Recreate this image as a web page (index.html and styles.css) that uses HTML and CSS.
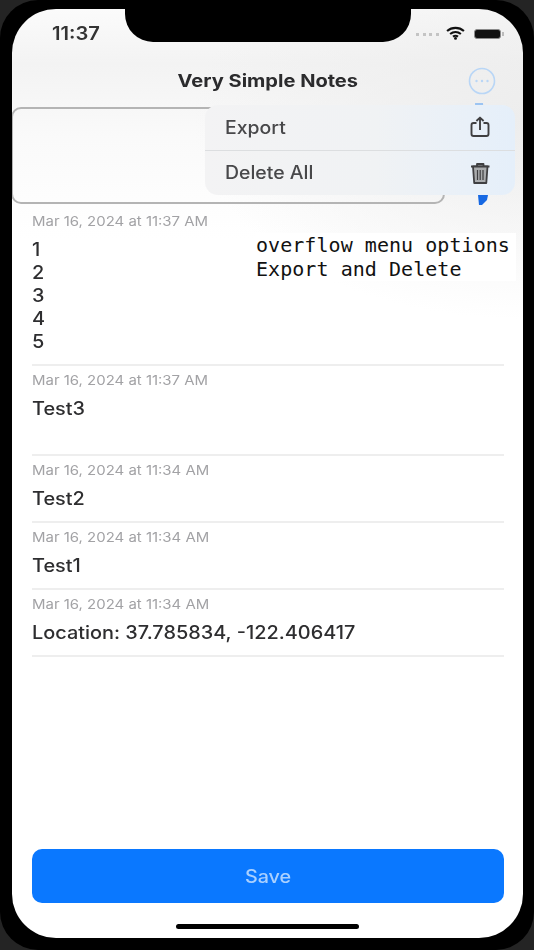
FILE: index.html
```html
<!DOCTYPE html>
<html lang="en">
<head>
    <meta charset="UTF-8">
    <meta name="viewport" content="width=device-width, initial-scale=1.0">
    <title>Very Simple Notes</title>
    <link rel="stylesheet" href="styles.css">
</head>
<body>
    <div class="phone">
        <div class="screen">
            <div class="notch"></div>

            <div class="status-bar">
                <span class="clock">11:37</span>
                <div class="status-icons">
                    <span class="signal"></span>
                    <svg class="wifi" width="19" height="14" viewBox="0 0 18 13">
                        <path d="M1 4.6C5.6 .6 12.4 .6 17 4.6M3.9 7.5C6.9 5 11.1 5 14.1 7.5M6.6 10C8 9 10 9 11.4 10" fill="none" stroke="#111" stroke-width="2"/>
                        <circle cx="9" cy="11.6" r="1.4" fill="#111"/>
                    </svg>
                    <span class="battery"></span>
                </div>
            </div>

            <header class="nav-bar">
                <h1>Very Simple Notes</h1>
                <svg class="more" width="28" height="28" viewBox="0 0 28 28">
                    <circle cx="14" cy="14" r="12.5" fill="none" stroke="#b9d6f6" stroke-width="1.6"/>
                    <circle cx="8.5" cy="14" r="1.2" fill="#b9d6f6"/>
                    <circle cx="14" cy="14" r="1.2" fill="#b9d6f6"/>
                    <circle cx="19.5" cy="14" r="1.2" fill="#b9d6f6"/>
                </svg>
            </header>

            <div class="editor-row">
                <div class="editor"></div>
                <div class="scroll-blue"></div>
            </div>

            <ul class="notes">
                <li class="note">
                    <div class="note-date">Mar 16, 2024 at 11:37 AM</div>
                    <div class="note-text">1<br>2<br>3<br>4<br>5</div>
                </li>
                <li class="note note-tall">
                    <div class="note-date">Mar 16, 2024 at 11:37 AM</div>
                    <div class="note-text">Test3</div>
                </li>
                <li class="note">
                    <div class="note-date">Mar 16, 2024 at 11:34 AM</div>
                    <div class="note-text">Test2</div>
                </li>
                <li class="note">
                    <div class="note-date">Mar 16, 2024 at 11:34 AM</div>
                    <div class="note-text">Test1</div>
                </li>
                <li class="note">
                    <div class="note-date">Mar 16, 2024 at 11:34 AM</div>
                    <div class="note-text">Location: 37.785834, -122.406417</div>
                </li>
            </ul>

            <button class="save" type="button"><span>Save</span></button>
            <div class="home-indicator"></div>

            <div class="menu">
                <div class="menu-item">
                    <span class="menu-label">Export</span>
                    <svg width="24" height="24" viewBox="0 0 24 24" fill="none" stroke="#3f3f41" stroke-width="1.9" stroke-linejoin="round">
                        <path d="M8.5 8H5.5Q3.5 8 3.5 10V19Q3.5 21 5.5 21H18.5Q20.5 21 20.5 19V10Q20.5 8 18.5 8H15.5"/>
                        <path d="M12 15V3M8.4 6L12 2.6L15.6 6"/>
                    </svg>
                </div>
                <div class="menu-item">
                    <span class="menu-label">Delete All</span>
                    <svg width="24" height="24" viewBox="0 0 24 24" fill="none" stroke="#3f3f41" stroke-width="1.8" stroke-linejoin="round">
                        <path d="M3 5.5H21.5M9 5.5V3H15.5V5.5"/>
                        <path d="M5 5.5L6.2 22H18.3L19.5 5.5Z" fill="#a9abad"/>
                        <path d="M9.5 9V19M12.2 9V19M15 9V19" stroke-width="1.2"/>
                    </svg>
                </div>
            </div>

            <div class="annotation">overflow menu options<br>Export and Delete</div>
        </div>
    </div>
</body>
</html>
```

FILE: styles.css
```css
/* General Styles */
body {
    margin: 0;
    background: #242424; /* shows in the corners, outside the phone */
    font-family: 'Inter', 'Liberation Sans', sans-serif;
    color: #2c2c2e;
    overflow: hidden;
}

.phone {
    height: 950px;
    padding: 9px 11px 12px 12px;
    box-sizing: border-box;
    background: #000;
    border-radius: 38px;
}

.screen {
    position: relative;
    height: 929px;
    display: flex;
    flex-direction: column;
    border-radius: 44px;
    overflow: hidden;
    background:
        radial-gradient(ellipse 330px 200px at 100% 110px, #ededed 0%, rgba(255, 255, 255, 0) 100%),
        linear-gradient(#fbfbfb 0, #f3f3f3 55px, #fafafa 130px, #fff 230px);
}

/* the source is a stretched, soft capture */
.status-bar, .nav-bar, .editor-row, .notes, .save, .home-indicator, .menu {
    filter: blur(0.6px);
}

.notch {
    position: absolute;
    top: 0;
    left: 113px;
    width: 286px;
    height: 33px;
    background: #000;
    border-radius: 0 0 28px 28px;
}

/* Status bar */
.status-bar {
    height: 49px;
    flex-shrink: 0;
    display: flex;
    justify-content: space-between;
    padding: 0 22px 0 40px;
    box-sizing: border-box;
}

.clock {
    font-size: 18px;
    font-weight: 600;
    line-height: 50px;
    color: #333;
    transform: scaleX(1.12);
    transform-origin: left;
}

.status-icons {
    display: flex;
    align-items: center;
    height: 50px;
}

.signal {
    width: 23px;
    margin-right: 7px;
    border-top: 3px dotted #c4c4c4;
}

.wifi {
    margin: -3px 9px 0 0;
}

.battery {
    position: relative;
    width: 25px;
    height: 8px;
    background: #111;
    border: 1px solid #8a8a8a;
    border-radius: 3px;
}

.battery::after {
    content: "";
    position: absolute;
    right: -4px;
    top: 2px;
    width: 2px;
    height: 4px;
    background: #bbb;
}

/* Navigation */
.nav-bar {
    position: relative;
    height: 49px;
    flex-shrink: 0;
    display: flex;
    align-items: center;
    justify-content: center;
}

.nav-bar h1 {
    margin: -4px 0 0;
    font-size: 17.5px;
    font-weight: 700;
    color: #2b2b2d;
    transform: scaleX(1.146);
}

.more {
    position: absolute;
    right: 27px;
    top: 9px;
}

/* Editor */
.editor-row {
    display: flex;
    height: 97px;
    flex-shrink: 0;
}

.editor {
    width: 434px;
    box-sizing: border-box;
    border: 2px solid #b4b4b4;
    border-radius: 10px;
    margin-left: -1px;
}

.scroll-blue {
    width: 13px;
    height: 102px;
    margin: -4px 0 0 30px;
    background: linear-gradient(#9cc4f2 0, #9cc4f2 4px, #1668e3 4px);
    clip-path: polygon(0 0, 8px 0, 13px 92px, 12px 97px, 7px 102px, 4px 102px, 3px 92px);
}

/* Notes list */
.notes {
    list-style: none;
    margin: 10px 19px 0 20px;
    padding: 0;
    flex: 1;
}

.note {
    padding-bottom: 11px;
    margin-bottom: 7px;
    border-bottom: 2px solid #eeeeee;
}

.note-tall {
    padding-bottom: 34px;
    margin-bottom: 7px;
}

.note-date {
    font-size: 13px;
    line-height: 15px;
    color: #a2a2a5;
    transform: scaleX(1.15);
    transform-origin: left;
}

.note-text {
    margin-top: 9px;
    font-size: 18px;
    font-weight: 500;
    line-height: 23px;
    color: #2e2e30;
    transform: scaleX(1.105);
    transform-origin: left;
}

/* Save */
.save {
    margin: 0 19px 0 20px;
    height: 54px;
    flex-shrink: 0;
    border: none;
    border-radius: 10px;
    background: #0a78ff;
    color: #a9d0ff;
    font-family: inherit;
    font-size: 18px;
    font-weight: 500;
}

.save span {
    display: inline-block;
    transform: scaleX(1.1);
}

.home-indicator {
    width: 183px;
    height: 5px;
    margin: 21px auto 9px;
    flex-shrink: 0;
    background: #000;
    border-radius: 3px;
}

/* Overflow menu */
.menu {
    position: absolute;
    left: 193px;
    top: 96px;
    width: 310px;
    background: linear-gradient(90deg, #f3f3f4 0%, #f0f2f4 55%, #e5effa 100%);
    border-radius: 13px;
}

.menu-item {
    height: 44.5px;
    display: flex;
    align-items: center;
    justify-content: space-between;
    padding: 0 23px 0 20px;
    font-size: 18px;
    font-weight: 500;
    color: #48484a;
}

.menu-item + .menu-item {
    border-top: 1px solid #dcdee0;
}

.menu-label {
    transform: scaleX(1.08);
    transform-origin: left;
}

/* Annotation pasted on the screenshot */
.annotation {
    position: absolute;
    left: 243px;
    top: 224px;
    width: 260px;
    height: 48px;
    padding-left: 1px;
    background: #fff;
    font-family: 'DejaVu Sans Mono', monospace;
    font-size: 20px;
    line-height: 24px;
    letter-spacing: 0.05px;
    color: #111;
}
```
